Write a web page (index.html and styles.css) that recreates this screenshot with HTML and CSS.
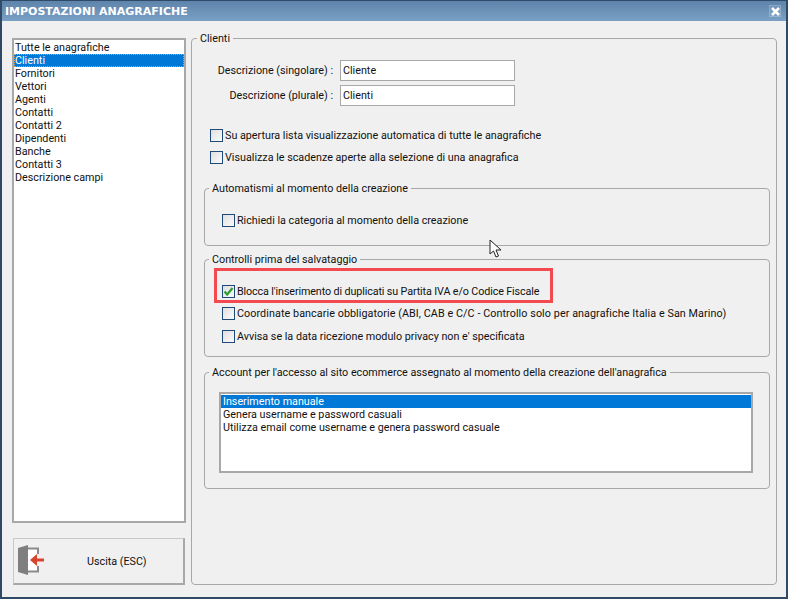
FILE: index.html
```html
<!DOCTYPE html>
<html lang="it">
<head>
<meta charset="utf-8">
<title>Impostazioni anagrafiche</title>
<link rel="stylesheet" href="styles.css">
</head>
<body>
<div class="window">
  <header class="titlebar">
    <span class="title">IMPOSTAZIONI ANAGRAFICHE</span>
    <span class="close"><svg width="9" height="9" viewBox="0 0 9 9"><path d="M1 1 L8 8 M8 1 L1 8" stroke="#fff" stroke-width="2.6" fill="none"/></svg></span>
  </header>
  <div class="content">
    <aside class="side">
      <ul class="list side-list">
        <li>Tutte le anagrafiche</li>
        <li class="selected focus">Clienti</li>
        <li>Fornitori</li>
        <li>Vettori</li>
        <li>Agenti</li>
        <li>Contatti</li>
        <li>Contatti 2</li>
        <li>Dipendenti</li>
        <li>Banche</li>
        <li>Contatti 3</li>
        <li>Descrizione campi</li>
      </ul>
      <button class="exit" type="button">
        <svg class="exit-icon" width="30" height="30" viewBox="0 0 30 30">
          <rect x="10" y="4" width="10" height="22" fill="#fff"/>
          <path d="M10 3.5 H21 V9 M21 21 V26.5 H10" fill="none" stroke="#8b8b8b" stroke-width="2"/>
          <path d="M1 3 L11 0 V30 L1 27 Z" fill="#7f7f7f"/>
          <path d="M20 9 L13 15 L20 21 Z" fill="#d8452e"/>
          <rect x="17" y="13.5" width="10" height="3" fill="#d8452e"/>
        </svg>
        <span class="exit-label">Uscita (ESC)</span>
      </button>
    </aside>
    <fieldset class="group main">
      <legend>Clienti</legend>
      <div class="field"><label class="field-label">Descrizione (singolare) :</label><span class="input">Cliente</span></div>
      <div class="field second"><label class="field-label">Descrizione (plurale) :</label><span class="input">Clienti</span></div>
      <div class="checks top-checks">
        <div class="check"><span class="box"></span>Su apertura lista visualizzazione automatica di tutte le anagrafiche</div>
        <div class="check"><span class="box"></span>Visualizza le scadenze aperte alla selezione di una anagrafica</div>
      </div>
      <fieldset class="group sub auto">
        <legend>Automatismi al momento della creazione</legend>
        <div class="check"><span class="box"></span>Richiedi la categoria al momento della creazione</div>
      </fieldset>
      <fieldset class="group sub controls">
        <legend>Controlli prima del salvataggio</legend>
        <div class="check tight"><span class="box"><svg width="13" height="13" viewBox="0 0 13 13"><path d="M2.5 6.5 L5.2 9.5 L10.5 3" fill="none" stroke="#2f9e2f" stroke-width="2.2"/></svg></span>Blocca l'inserimento di duplicati su Partita IVA e/o Codice Fiscale</div>
        <div class="check loose"><span class="box"></span>Coordinate bancarie obbligatorie (ABI, CAB e C/C - Controllo solo per anagrafiche Italia e San Marino)</div>
        <div class="check"><span class="box"></span>Avvisa se la data ricezione modulo privacy non e' specificata</div>
      </fieldset>
      <fieldset class="group sub account">
        <legend>Account per l'accesso al sito ecommerce assegnato al momento della creazione dell'anagrafica</legend>
        <ul class="list account-list">
          <li class="selected">Inserimento manuale</li>
          <li>Genera username e password casuali</li>
          <li>Utilizza email come username e genera password casuale</li>
        </ul>
      </fieldset>
    </fieldset>
  </div>
  <div class="highlight"></div>
  <svg class="cursor" width="14" height="20" viewBox="0 0 14 20"><path d="M1 1 V15 L4.5 12 L7 18 L9.5 17 L7 11 H12 Z" fill="#fff" stroke="#222" stroke-width="1"/></svg>
</div>
</body>
</html>
```
FILE: styles.css
```css
* { box-sizing: border-box; }
html, body { margin: 0; padding: 0; }
body {
  width: 788px;
  height: 599px;
  overflow: hidden;
  font-family: Roboto, "Liberation Sans", sans-serif;
  font-size: 10.75px;
  color: #111;
  background: #f0f0f0;
}
.window {
  position: relative;
  width: 788px;
  height: 599px;
  display: flex;
  flex-direction: column;
  background: #f0f0f0;
  border: solid #2f4a66;
  border-width: 1px 2px 2px 2px;
}
.titlebar {
  height: 20px;
  flex: none;
  display: flex;
  align-items: center;
  justify-content: space-between;
  padding: 0 5px 0 3px;
  background: linear-gradient(#5f84ab, #7ba0c6);
  color: #fff;
}
.title {
  font-family: "DejaVu Sans", sans-serif;
  font-weight: bold;
  font-size: 11px;
}
.close {
  width: 12px;
  height: 12px;
  display: flex;
  align-items: center;
  justify-content: center;
  background: rgba(255, 255, 255, 0.08);
  border: 1px solid rgba(255, 255, 255, 0.18);
}
.content {
  flex: 1;
  display: flex;
  gap: 5px;
  padding: 10px 9px 0 10px;
}
.side {
  width: 174px;
  flex: none;
  display: flex;
  flex-direction: column;
  padding-top: 7px;
}
.list {
  margin: 0;
  padding: 1px 0;
  list-style: none;
  background: #fff;
  border: 2px solid #a8a8a8;
  line-height: 13px;
}
.list li {
  height: 13px;
  padding-left: 1px;
  white-space: nowrap;
}
.selected {
  background: #0078d7;
  color: #fff;
}
.focus { outline: 1px dotted #e0a050; outline-offset: -1px; }
.side-list { height: 485px; flex: none; }
.exit {
  margin: 15px 0 0 1px;
  height: 47px;
  width: 172px;
  display: flex;
  align-items: center;
  padding: 0 0 0 2px;
  background: #f0f0f0;
  border: 1px solid #c8c8c8;
  border-right: 2px solid #a8a8a8;
  border-bottom: 2px solid #a8a8a8;
  font: inherit;
  color: #111;
}
.exit-icon { flex: none; margin: 0 0 2px 1px; }
.exit-label { margin-left: 40px; }
.group {
  margin: 0;
  padding: 0;
  min-width: 0;
  border: 1px solid #a8a8a8;
  border-radius: 4px;
}
.group legend {
  margin-left: 4px;
  padding: 0 3px;
  line-height: 16px;
  height: 14px;
  white-space: nowrap;
}
.main { width: 587px; height: 554px; }
.main > legend { margin-left: 5px; }
.field {
  display: flex;
  align-items: center;
  margin-top: 15px;
  height: 21px;
}
.field.second { margin-top: 4px; }
.field-label {
  width: 141px;
  text-align: right;
}
.input {
  margin-left: 7px;
  width: 175px;
  height: 21px;
  padding: 0 2px;
  line-height: 19px;
  background: #fff;
  border: 1px solid #a8a8a8;
}
.check {
  display: flex;
  align-items: center;
  height: 14px;
  white-space: nowrap;
}
.tight { letter-spacing: -0.12px; }
.loose { letter-spacing: 0.08px; }
.box {
  flex: none;
  width: 13px;
  height: 13px;
  margin-right: 2px;
  border: 1px solid #1f4a78;
  background: linear-gradient(135deg, #e0e0e0, #fafafa);
  display: flex;
}
.box svg { margin: -1px; flex: none; }
.top-checks {
  margin: 22px 0 0 18px;
  display: flex;
  flex-direction: column;
  gap: 8px;
}
.sub { width: 566px; margin-left: 12px; }
.auto { height: 65px; margin-top: 17px; }
.controls { height: 105px; margin-top: 6px; }
.sub > .check { margin-left: 17px; }
.auto > .check { margin-top: 18px; }
.controls > .check:nth-of-type(1) { margin-top: 18px; }
.controls > .check + .check { margin-top: 8px; }
.controls > .check:last-child { margin-top: 9px; }
.account { height: 124px; margin-top: 8px; }
.account-list {
  height: 81px;
  width: 534px;
  margin: 13px 0 0 14px;
}
.account-list li { padding-left: 2px; }
.highlight {
  position: absolute;
  left: 212px;
  top: 267px;
  width: 339px;
  height: 35px;
  border: 3px solid #f44a4f;
}
.cursor {
  position: absolute;
  left: 487px;
  top: 238px;
}
```
